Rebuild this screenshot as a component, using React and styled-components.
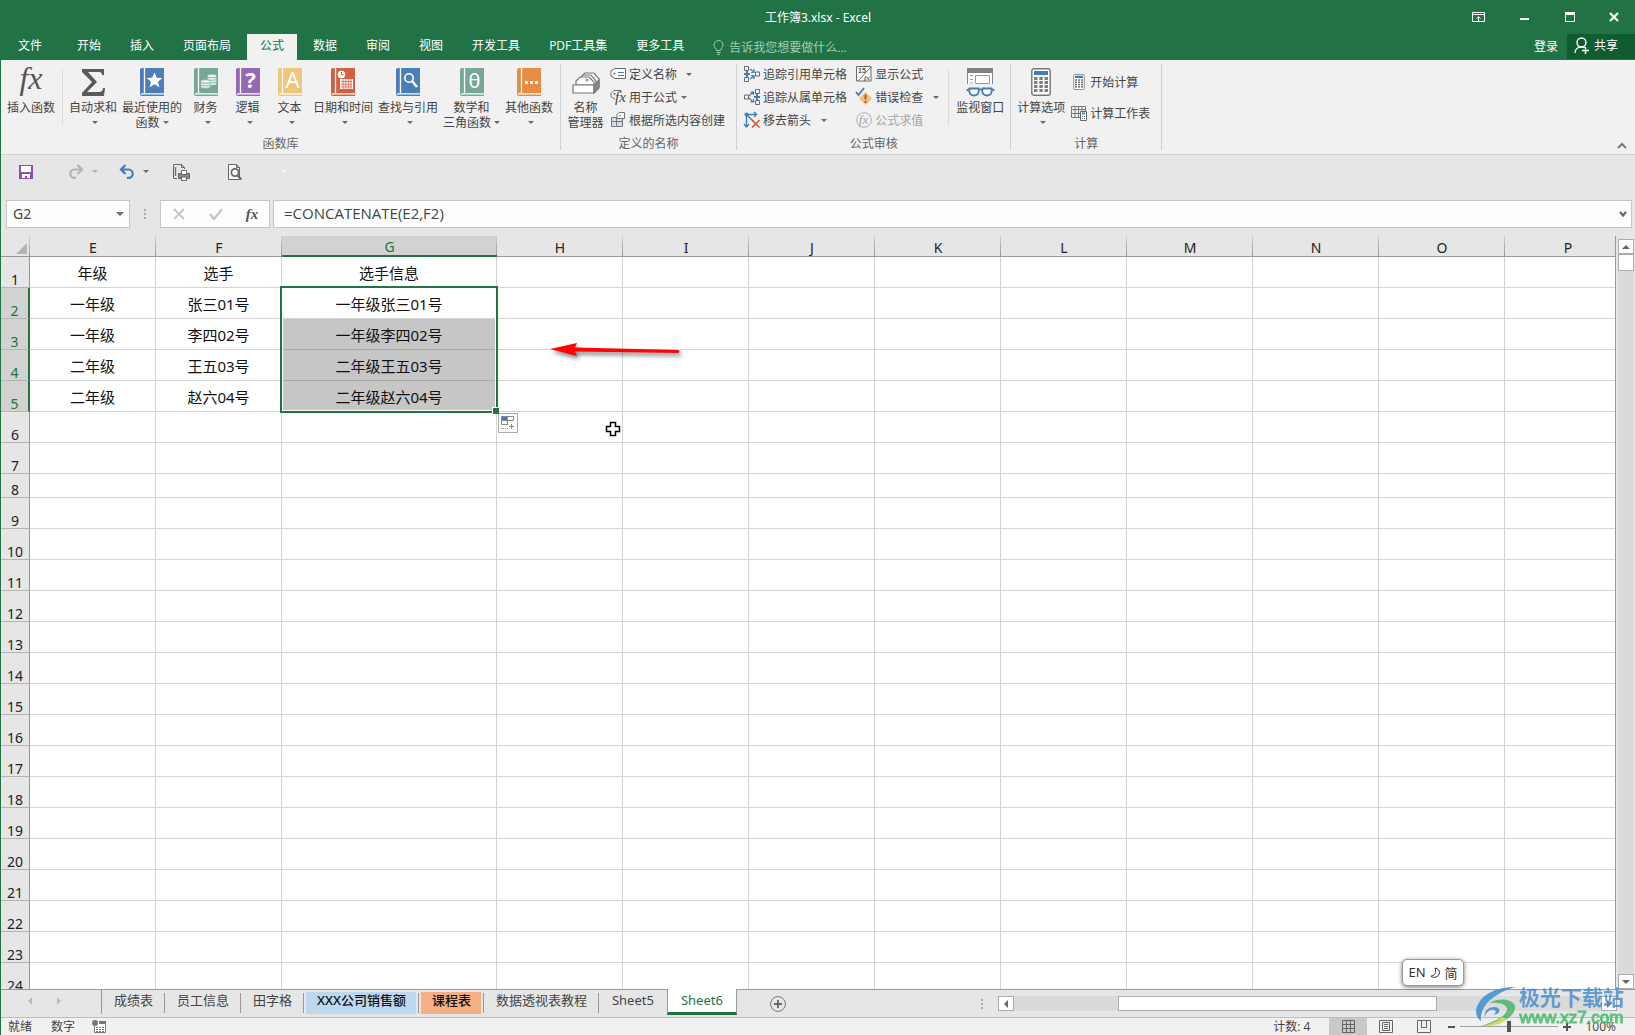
import React from "react";
import styled, { createGlobalStyle, css } from "styled-components";

const GREEN = "#217346";
const BLUE = "#3f7dbb";
const INK = "#444444";
const SANS = '"Noto Sans", "Noto Sans CJK SC", sans-serif';
const UI = '"Open Sans", "Noto Sans CJK SC", sans-serif';

const Global = createGlobalStyle`
  *, *::before, *::after { box-sizing: border-box; }
  html, body { margin: 0; height: 100%; }
  body { font-family: ${UI}; font-size: 12px; color: ${INK}; background: #e6e6e6; }
  button, input { font: inherit; color: inherit; }
  button { border: 0; padding: 0; margin: 0; background: none; cursor: default; }
  svg { display: block; flex: none; overflow: visible; }
`;

const Window = styled.div`
  display: flex;
  flex-direction: column;
  height: 100vh;
  border-left: 1px solid ${GREEN};
  background: #e6e6e6;
  position: relative;
  overflow: hidden;
`;

/* ---------- title bar and ribbon tabs ---------- */
const TitleBar = styled.header`
  display: grid;
  grid-template-columns: 1fr auto 1fr;
  align-items: center;
  height: 34px;
  flex: none;
  background: ${GREEN};
  color: #fff;
`;
const Title = styled.h1`
  margin: 0;
  font-family: ${SANS};
  font-size: 12px;
  font-weight: 400;
`;
const WindowButtons = styled.div`
  display: flex;
  justify-content: flex-end;
`;
const WindowButton = styled.button`
  display: grid;
  place-items: center;
  width: 46px;
  height: 32px;
  &:last-child { width: 42px; }
`;
const TabBar = styled.nav`
  display: flex;
  height: 26px;
  flex: none;
  gap: 3px;
  background: ${GREEN};
  color: #fff;
`;
const RibbonTab = styled.button`
  padding: 2px 13px 4px;
  line-height: 20px;
  white-space: nowrap;
  ${(p) => p.$file && css`
    width: 58px;
    margin-right: 2px;
  `}
  ${(p) => p.$active && css`
    background: #f1f1f1;
    color: ${GREEN};
  `}
`;
const TellMe = styled.label`
  display: flex;
  align-items: center;
  gap: 5px;
  padding-left: 13px;
  flex: 1;
`;
const TellInput = styled.input`
  border: 0;
  padding: 0;
  width: 160px;
  background: none;
  &::placeholder { color: #a3cdb3; opacity: 1; }
`;
const Login = styled.button`
  padding: 0 6px 2px;
`;
const Share = styled.button`
  display: flex;
  align-items: center;
  gap: 4px;
  height: 25px;
  padding: 0 17px 3px 7px;
  background: #0e5c2f;
`;

/* ---------- ribbon ---------- */
const Ribbon = styled.section`
  display: flex;
  height: 95px;
  flex: none;
  padding-top: 4px;
  background: #f1f1f1;
  border-bottom: 1px solid #d2d2d2;
`;
const Group = styled.div`
  display: flex;
  flex-direction: column;
  height: 86px;
  border-right: 1px solid #cfcfcf;
`;
const GroupBody = styled.div`
  display: flex;
  height: 72px;
  gap: ${(p) => p.$gap || 1}px;
  padding: 0 ${(p) => p.$right || 0}px 0 ${(p) => p.$left || 0}px;
`;
const GroupLabel = styled.div`
  height: 14px;
  line-height: 16px;
  text-align: center;
  color: #666;
`;
const InnerRule = styled.div`
  width: 1px;
  height: 55px;
  margin: 6px ${(p) => p.$after || 0}px 0 ${(p) => p.$before || 0}px;
  background: #dcdcdc;
`;
const BigButton = styled.button`
  display: flex;
  flex-direction: column;
  align-items: center;
  min-width: ${(p) => p.$width || 41}px;
  padding: 3px 2px 0;
  white-space: nowrap;
`;
const IconBox = styled.span`
  display: grid;
  place-items: center;
  height: 30px;
  margin-bottom: 3px;
`;
const Line = styled.span`
  display: flex;
  align-items: center;
  justify-content: center;
  gap: 3px;
  height: 15px;
  line-height: 15px;
`;
const CaretLine = styled(Line)`
  padding-left: 4px;
`;
const Caret = styled.i`
  width: 0;
  height: 0;
  border: 3px solid transparent;
  border-bottom-width: 0;
  border-top-color: ${(p) => p.$color || "#6a6a6a"};
`;
const SmallColumn = styled.div`
  display: flex;
  flex-direction: column;
  gap: ${(p) => p.$gap || 0}px;
  padding-top: ${(p) => p.$top || 0}px;
`;
const SmallButton = styled.button`
  display: flex;
  align-items: center;
  height: 23px;
  gap: 3px;
  padding: 0 4px 3px 0;
  white-space: nowrap;
  color: ${(p) => (p.$disabled ? "#a6a6a6" : INK)};
  ${Caret} { margin-left: ${(p) => p.$caret || 3}px; }
`;
const SmallIcon = styled.span`
  display: grid;
  place-items: center;
  width: 16px;
`;
const Collapse = styled.button`
  align-self: flex-end;
  margin-left: auto;
  padding: 0 8px 5px;
`;

/* ---------- quick access and formula bar ---------- */
const QuickBar = styled.div`
  display: flex;
  align-items: center;
  height: 45px;
  flex: none;
  padding: 0 0 12px 17px;
`;
const QuickButton = styled.button`
  display: flex;
  align-items: center;
  height: 20px;
  gap: 8px;
  margin-right: ${(p) => p.$after}px;
`;
const FormulaRow = styled.div`
  display: flex;
  height: 36px;
  flex: none;
  padding: 0 3px 8px 5px;
  font-family: ${SANS};
  font-size: 14px;
`;
const NameBox = styled.div`
  display: flex;
  align-items: center;
  width: 124px;
  padding: 0 5px 0 6px;
  background: #fdfdfd;
  border: 1px solid #c6c6c6;
`;
const BareInput = styled.input`
  flex: 1;
  min-width: 0;
  border: 0;
  padding: 0 0 2px;
  background: none;
  outline: 0;
`;
const BigCaret = styled(Caret)`
  display: block;
  border-width: 4px 4px 0;
`;
const Dots = styled.div`
  display: grid;
  place-items: center;
  width: ${(p) => p.$width}px;
`;
const FormulaButtons = styled.div`
  display: flex;
  align-items: center;
  justify-content: space-between;
  width: 110px;
  margin-right: 3px;
  padding: 0 11px 0 12px;
  background: #fdfdfd;
  border: 1px solid #c6c6c6;
`;
const FormulaBox = styled(NameBox)`
  flex: 1;
  padding: 0 4px 0 10px;
  font-family: ${UI};
  font-size: 15px;
`;

/* ---------- sheet ---------- */
const SheetArea = styled.main`
  display: flex;
  flex: 1;
  min-height: 0;
  border-bottom: 1px solid #999;
`;
const Viewport = styled.div`
  position: relative;
  flex: 1;
  min-width: 0;
  overflow: hidden;
`;
const GridTable = styled.table`
  table-layout: fixed;
  width: 1630px;
  border-collapse: separate;
  border-spacing: 0;
  font-family: ${SANS};
  font-size: 15px;
  line-height: 18px;
  color: #111;
`;
const Col = styled.col`
  width: ${(p) => p.$w}px;
`;
const ColHead = styled.th`
  height: 21px;
  padding: 4px 0 0;
  font-size: 14px;
  line-height: 16px;
  font-weight: 400;
  color: ${(p) => (p.$on ? GREEN : "#222")};
  border-bottom: ${(p) => (p.$on ? `2px solid ${GREEN}` : "1px solid #999")};
  background:
    linear-gradient(to bottom, #d0d0d0, #999) right / 1px 100% no-repeat,
    ${(p) => (p.$on ? "#d2d2d2" : "#e6e6e6")};
  ${(p) => p.$on && css`
    padding-top: 3px;
  `}
`;
const Corner = styled(ColHead)`
  svg { margin-left: auto; margin-right: 3px; }
`;
const RowHead = styled.th`
  height: ${(p) => p.$h}px;
  padding: 0;
  vertical-align: bottom;
  font-size: 14px;
  line-height: 15px;
  font-weight: 400;
  color: ${(p) => (p.$on ? GREEN : "#222")};
  background: ${(p) => (p.$on ? "#d2d2d2" : "#e6e6e6")};
  border-bottom: 1px solid #b4b4b4;
  border-right: ${(p) => (p.$on ? `2px solid ${GREEN}` : "1px solid #999")};
`;
const Cell = styled.td`
  position: relative;
  padding: 1px 0 0;
  text-align: center;
  white-space: nowrap;
  background: ${(p) => (p.$shade ? "#c6c6c6" : "#fff")};
  border-right: 1px solid #d4d4d4;
  border-bottom: 1px solid ${(p) => (p.$shade ? "#a8a8a8" : "#d4d4d4")};
`;
const Selection = styled.div`
  position: absolute;
  z-index: 1;
  top: -2px;
  left: -2px;
  width: 218px;
  height: 127px;
  border: 2px solid ${GREEN};
  box-shadow: inset 0 0 0 1px #fff;
  &::after {
    content: "";
    position: absolute;
    right: -3px;
    bottom: -3px;
    width: 7px;
    height: 7px;
    background: ${GREEN};
    border: solid #fff;
    border-width: 1px 0 0 1px;
  }
`;
const FillOptions = styled.button`
  position: absolute;
  left: 497px;
  top: 177px;
  display: grid;
  place-items: center;
  width: 20px;
  height: 20px;
  background: #fff;
  border: 1px solid #ababab;
`;
const Overlay = styled.div`
  position: absolute;
  left: ${(p) => p.$x}px;
  top: ${(p) => p.$y}px;
`;
const VScroll = styled.div`
  display: flex;
  flex-direction: column;
  width: 20px;
  padding: 3px 1px 0 2px;
  border-left: 1px solid #999;
`;
const ScrollButton = styled.button`
  display: grid;
  place-items: center;
  width: 16px;
  height: 15px;
  flex: none;
  background: #fff;
  border: 1px solid #ababab;
`;
const VTrack = styled.div`
  flex: 1;
  background: #dadada;
`;
const VThumb = styled.div`
  height: 17px;
  background: #fff;
  border: 1px solid #ababab;
`;

/* ---------- sheet tabs ---------- */
const SheetBar = styled.footer`
  display: flex;
  height: 28px;
  flex: none;
  border-bottom: 1px solid #bdbdbd;
`;
const SheetNav = styled.div`
  display: flex;
  align-items: center;
  width: 101px;
  padding: 0 0 2px 25px;
  gap: 21px;
  border-right: 1px solid #999;
  height: 24px;
`;
const SheetTab = styled.button`
  position: relative;
  height: 25px;
  padding: 0 12px 5px;
  font-family: ${SANS};
  font-size: 13px;
  line-height: 20px;
  white-space: nowrap;
  color: ${(p) => (p.$fill ? "#111" : INK)};
  background: linear-gradient(#999, #999) right 0 top 3px / 1px 20px no-repeat,
    ${(p) => (p.$fill ? `linear-gradient(${p.$fill}, ${p.$fill}) 2px 2px / calc(100% - 5px) 22px no-repeat` : "none")};
  ${(p) => p.$fill && css`
    font-weight: 500;
    padding-left: 13px;
    padding-right: 13px;
  `}
  ${(p) => p.$active && css`
    width: 70px;
    background: #fff;
    color: ${GREEN};
    margin-top: -1px;
    height: 26px;
    border-right: 1px solid #999;
    border-left: 1px solid #999;
    border-bottom: 3px solid ${GREEN};
    padding-bottom: 1px;
  `}
  ${(p) => p.$last && css`
    padding-left: 13px;
    padding-right: 13px;
    background: none;
  `}
`;
const SheetTabs = styled.div`
  display: flex;
  flex: 1;
  min-width: 0;
`;
const AddSheet = styled.button`
  padding: 0 33px;
`;
const HScroll = styled.div`
  display: flex;
  align-items: center;
  flex: 0 0 41%;
  padding-right: 18px;
`;
const HTrack = styled.div`
  flex: 1;
  height: 15px;
  padding-left: 16%;
  background: #dadada;
`;
const HThumb = styled.div`
  width: 66%;
  height: 15px;
  background: #fff;
  border: 1px solid #ababab;
`;

/* ---------- status bar ---------- */
const StatusBar = styled.footer`
  display: flex;
  align-items: center;
  height: 17px;
  flex: none;
  padding: 0 19px 0 7px;
  background: #f1f1f1;
`;
const StatusText = styled.span`
  line-height: 16px;
  margin-right: ${(p) => p.$after || 0}px;
  margin-left: ${(p) => p.$push || "0"};
`;
const ViewButton = styled.button`
  display: grid;
  place-items: center;
  width: 38px;
  height: 17px;
  background: ${(p) => (p.$on ? "#c8c8c8" : "none")};
`;
const ZoomButton = styled.button`
  display: grid;
  place-items: center;
  width: 17px;
  height: 17px;
`;
const ZoomSlider = styled.input`
  appearance: none;
  width: 98px;
  height: 12px;
  margin: 0;
  background: linear-gradient(#a0a0a0, #a0a0a0) center / 100% 1px no-repeat;
  &::-webkit-slider-thumb {
    appearance: none;
    width: 4px;
    height: 11px;
    background: #555;
  }
`;

/* ---------- floating pieces ---------- */
const ImeBadge = styled.div`
  position: absolute;
  right: 171px;
  bottom: 49px;
  display: flex;
  align-items: center;
  justify-content: center;
  gap: 4px;
  width: 62px;
  height: 27px;
  padding-bottom: 1px;
  font-family: ${SANS};
  font-size: 13px;
  color: #333;
  background: #fff;
  border: 1px solid #999;
  border-radius: 5px;
  box-shadow: 0 1px 4px rgba(0, 0, 0, 0.55);
`;
const Watermark = styled.div`
  position: absolute;
  right: 11px;
  bottom: 7px;
  display: flex;
  align-items: center;
  gap: 1px;
  opacity: 0.85;
  pointer-events: none;
`;
const MarkText = styled.div`
  display: flex;
  flex-direction: column;
  align-items: center;
  font-weight: 700;
`;
const MarkName = styled.span`
  font-size: 21px;
  line-height: 22px;
  color: #4d8fd0;
`;
const MarkUrl = styled.span`
  font-family: "Liberation Sans", sans-serif;
  font-size: 17px;
  font-weight: 400;
  line-height: 20px;
  color: #45bb6a;
  -webkit-text-stroke: 1px #45bb6a;
`;

/* ---------- icons ---------- */
const Svg = ({ w, h, children, ...rest }) => (
  <svg width={w} height={h} viewBox={`0 0 ${w} ${h}`} fill="none" aria-hidden="true" {...rest}>
    {children}
  </svg>
);
const Fx = ({ w = 24, h = 28, size = 32, color = "#555", weight = 400 }) => (
  <Svg w={w} h={h}>
    <text x={w / 2} y={h * 0.76} textAnchor="middle" fontFamily="Liberation Serif, serif" fontStyle="italic" fontWeight={weight} fontSize={size} fill={color}>fx</text>
  </Svg>
);
const Sigma = () => (
  <Svg w={24} h={28}>
    <path d="M1 1h22v6h-2c0-2-1-3-3-3H7l9 10-10 10h12c2 0 4-1 4-4h2l-1 8H1v-3l10-11L1 4z" fill="#5a5a5a" />
  </Svg>
);
const Book = ({ color, children }) => (
  <Svg w={24} h={28}>
    <path d="M2 0h22v28H2a2 2 0 0 1-2-2V2a2 2 0 0 1 2-2z" fill={color} />
    <path d="M4.5 0v25M1 25.8h23" stroke="#fff" strokeWidth="1.3" />
    {children}
  </Svg>
);
const BookLetter = ({ children, weight = 400, size = 22 }) => (
  <text x="14.5" y="20" textAnchor="middle" fontFamily="Noto Sans, sans-serif" fontSize={size} fontWeight={weight} fill="#fff">{children}</text>
);
const Coins = () => (
  <g fill="#e6f1ed" stroke="#76a797" strokeWidth=".7">
    {[15.5, 13, 10.5, 8].map((y) => <ellipse key={y} cx="18" cy={y} rx="4.8" ry="1.9" />)}
    {[18.5, 16, 13.5].map((y) => <ellipse key={y} cx="11.5" cy={y} rx="5" ry="1.900" />)}
  </g>
);
const DateMark = () => (
  <g>
    <circle cx="10.5" cy="6.5" r="3.8" fill="#fff" />
    <path d="M10.5 4v2.7h2" stroke="#d55f42" />
    <path d="M9 11h13v10H9z" fill="#fff" />
    <path d="M10 13.5h11M10 16.2h11M10 18.9h11M12 11v10M14.7 11v10M17.3 11v10M20 11v10" stroke="#d55f42" strokeWidth=".8" />
  </g>
);
const NameManager = () => (
  <Svg w={28} h={28}>
    <g stroke="#777" strokeWidth="1.2" fill="#fff">
      <path d="M10 8l3-3h9l5 6v8" />
      <path d="M8 10l3-3h8l5 6v6" />
      <path d="M4 17v-4l4-4h9l5 5v3z" />
      <path d="M1 17h21v8H1z" />
      <path d="M22 17l5-5v8l-5 5z" fill="#888" />
    </g>
    <circle cx="15" cy="12" r="1" stroke="#777" />
  </Svg>
);
const TagIcon = () => (
  <Svg w={16} h={16}>
    <path d="M5 2.5h10.5v10H5L1 10V5z" stroke="#6a6a6a" fill="#fff" />
    <path d="M8 6.5h6M8 9.5h6" stroke={BLUE} strokeWidth="1.2" />
    <circle cx="4.5" cy="7.5" r="1" fill="#6a6a6a" />
  </Svg>
);
const TagFx = () => (
  <Svg w={16} h={16}>
    <path d="M11 4V1.500H4L1 4.500v3l4 3" stroke="#6a6a6a" />
    <circle cx="4.500" cy="5" r="1" fill="#6a6a6a" />
    <text x="5" y="13" fontFamily="Liberation Serif, serif" fontStyle="italic" fontSize="15" fill="#444">fx</text>
  </Svg>
);
const CreateFrom = () => (
  <Svg w={16} h={16}>
    <path d="M1.500 5.500h11v9h-11z" fill="#cfdceb" stroke="#777" />
    <path d="M1 9.500h12M6.500 5v10" stroke="#777" />
    <path d="M7 2.500L9 .5h5.500v6H7z" fill="#fff" stroke="#777" />
    <circle cx="10" cy="3.500" r=".8" fill="#777" />
  </Svg>
);
const Precedents = () => (
  <Svg w={16} h={16}>
    <path d="M.5 .5h4v4h-4zM.5 11.500h4v4h-4zM11.500 6h4v4h-4z" stroke="#6a6a6a" />
    <path d="M3 5v6M0 8h6" stroke={BLUE} strokeWidth="2" />
    <path d="M6 3l4 3M6 13l4-3M10 3v3.500H7M10 13V9.500H7" stroke={BLUE} strokeWidth="1.200" />
  </Svg>
);
const Dependents = () => (
  <Svg w={16} h={16}>
    <path d="M11.500 .5h4v4h-4zM11.500 11.500h4v4h-4zM.5 6h4v4h-4z" stroke="#6a6a6a" />
    <path d="M13 5v6M10 8h6" stroke={BLUE} strokeWidth="2" />
    <path d="M5 7l4-4M5 9l4 4M6.500 3h3v3M6.500 13h3v-3" stroke={BLUE} strokeWidth="1.200" />
  </Svg>
);
const RemoveArrows = () => (
  <Svg w={16} h={16}>
    <path d="M2.500 3v11M2.500 2.500h9M3 3l7 7M0 12l2.500 3L5 12M10 0l2.500 2.500L10 5" stroke={BLUE} strokeWidth="1.4" />
    <circle cx="2.500" cy="2.500" r="2" fill={BLUE} />
    <path d="M8 8l7.500 7.500M15.500 8L8 15.500" stroke="#d9532f" strokeWidth="1.6" />
  </Svg>
);
const ShowFormulas = () => (
  <Svg w={16} h={16}>
    <path d="M.5 .5h14.500v14.500H.5z" stroke="#6a6a6a" fill="#fff" />
    <path d="M2 15L15 1" stroke="#6a6a6a" />
    <text x="2" y="7" fontFamily="Liberation Sans, sans-serif" fontSize="7" fontWeight="700" fill="#555">15</text>
    <text x="8" y="14" fontFamily="Liberation Serif, serif" fontStyle="italic" fontSize="7" fontWeight="700" fill="#555">fx</text>
  </Svg>
);
const ErrorCheck = () => (
  <Svg w={16} h={16}>
    <path d="M9.500 3l6.500 6.500-6.500 6.500L3 9.500z" fill="#efc375" />
    <path d="M9.500 5.500v5M9.500 12v2" stroke="#c8402b" strokeWidth="1.8" />
    <path d="M0 3l2.500 3L8 -1" stroke={BLUE} strokeWidth="1.8" />
  </Svg>
);
const Evaluate = () => (
  <Svg w={16} h={16}>
    <circle cx="8" cy="8" r="7.300" stroke="#b5a9b8" />
    <text x="7.500" y="12" textAnchor="middle" fontFamily="Liberation Serif, serif" fontStyle="italic" fontSize="13" fill="#a6a6a6">fx</text>
  </Svg>
);
const WatchWindow = () => (
  <Svg w={28} h={30}>
    <path d="M1.500 1v16M26.500 1v16" stroke="#8a8a8a" />
    <path d="M2 5h24v12H2z" fill="#fff" />
    <path d="M1 1h26v5H1z" fill="#808080" />
    <path d="M9.500 8.500h14v8h-14zM4 8.500h3M4 12.500h3M4 16h3" stroke="#999" />
    <g stroke={BLUE} strokeWidth="1.800" fill="#fff">
      <path d="M3.500 21.500h9c1 4-.5 7-4.500 7s-5.500-3-4.500-7zM16.500 21.500h9c1 4-.5 7-4.500 7s-5.500-3-4.500-7z" />
      <path d="M12.500 23c1.500-1 2.500-1 4 0M3.500 22l-3 1.500M25.500 22l3 1.500" fill="none" />
    </g>
  </Svg>
);
const CalcIcon = ({ w = 20, h = 28 }) => (
  <svg width={w} height={h} viewBox="0 0 20 28" fill="none" aria-hidden="true">
    <rect x=".8" y=".8" width="18.400" height="26.400" rx="2" stroke="#777" strokeWidth="1.400" fill="#fff" />
    <path d="M3 3h14v4H3z" fill={BLUE} />
    {[9, 13, 17, 21].map((y) => [3, 8.3, 13.5].map((x) => <rect key={`${x}-${y}`} x={x} y={y} width="3.500" height="3" fill="#808080" />))}
  </svg>
);
const CalcSheet = () => (
  <Svg w={16} h={16}>
    <path d="M.5 1.500h14v11H.5zM.5 4.500h14M.5 8.500h9M4 1v12M7.500 1v12M11 1v6" stroke="#777" />
    <path d="M9.500 6.500h6v9h-6z" fill="#fff" stroke="#666" />
    <path d="M11 8.500h3" stroke={BLUE} strokeWidth="2" />
    <path d="M11 11.500h1M13 11.500h1M11 13.500h1M13 13.500h1" stroke="#666" />
  </Svg>
);
const SaveIcon = () => (
  <Svg w={16} h={16}>
    <path d="M1 1h14v14H1z" fill="#8a52a8" />
    <path d="M3 2h10v6H3zM4 10h8v4H9v-2H7v2H4z" fill="#fff" />
  </Svg>
);
const CurvedArrow = ({ color, flip }) => (
  <Svg w={16} h={16}>
    <g transform={flip ? "translate(16 0) scale(-1 1)" : undefined}>
      <path d="M2 5.500h7.500a4.200 4.200 0 0 1 0 8.400H8M6.500 1L2 5.500 6.500 10" stroke={color} strokeWidth="2.200" />
    </g>
  </Svg>
);
const PrintIcon = () => (
  <Svg w={18} h={18}>
    <path d="M5 15.500H1.500v-14h8l3 3V6M9.500 1.500v3h3" stroke="#666" />
    <path d="M3.500 4v9" stroke={BLUE} strokeWidth="1.400" />
    <path d="M6.500 10.500h11v5h-11z" fill="#888" stroke="#666" />
    <path d="M9.500 7.500h5v4h-5zM9.500 14h5v3.500h-5z" fill="#fff" stroke="#666" />
  </Svg>
);
const PreviewIcon = () => (
  <Svg w={16} h={18}>
    <path d="M1.500 1.500h8l3 3v12h-11zM9.500 1.500v3h3" stroke="#666" fill="#f6f6f6" />
    <circle cx="8" cy="9.500" r="3.600" stroke="#666" strokeWidth="1.800" fill="#fff" />
    <path d="M10.500 12.500l4 4" stroke="#666" strokeWidth="2" />
  </Svg>
);
const DotsIcon = () => (
  <Svg w={4} h={12}>
    <path d="M1 1h2v2H1zM1 5h2v2H1zM1 9h2v2H1z" fill="#aaa" />
  </Svg>
);
const Arrowhead = ({ dir, color = "#666" }) => {
  const d = {
    up: "M0 6l4-4 4 4z",
    down: "M0 2l4 4 4-4z",
    left: "M6 0L2 4l4 4z",
    right: "M2 0l4 4-4 4z",
  }[dir];
  return <Svg w={8} h={8}><path d={d} fill={color} /></Svg>;
};
const Swirl = () => (
  <svg width="43" height="42" viewBox="0 0 43 42" fill="none" aria-hidden="true">
    <path d="M42 1C22 0 3 9 1 25c0 5 2 8 5 10-1-9 4-19 16-26 6-4 13-7 20-8z" fill="#3c8fd0" />
    <path d="M14 17c10-6 24-4 26 3 2 10-15 20-35 20 12-3 25-9 27-16 1-6-9-8-18-7z" fill="#4bb56c" />
    <path d="M5 40c9-1 17-4 22-9l5 2c-7 6-17 8-27 7z" fill="#c9d84a" />
    <path d="M10 31c-2-8 8-12 13-9 4 3-1 8-5 6 3 0 4-3 1-4-4-1-8 2-9 7z" fill="#3c8fd0" />
  </svg>
);

/* ---------- content ---------- */
const TABS = ["文件", "开始", "插入", "页面布局", "公式", "数据", "审阅", "视图", "开发工具", "PDF工具集", "更多工具"];

const LIBRARY = [
  { lines: ["自动求和"], icon: <Sigma /> },
  { lines: ["最近使用的", "函数"], icon: <Book color="#4a7fb8"><path d="M14.500 4.500l2.200 5.200 5.600.4-4.300 3.600 1.400 5.500-4.900-3-4.900 3 1.400-5.500-4.300-3.600 5.600-.4z" fill="#fff" /></Book> },
  { lines: ["财务"], icon: <Book color="#76a797"><Coins /></Book> },
  { lines: ["逻辑"], icon: <Book color="#9668b8"><BookLetter weight={700}>?</BookLetter></Book> },
  { lines: ["文本"], icon: <Book color="#eec67c"><BookLetter>A</BookLetter></Book> },
  { lines: ["日期和时间"], icon: <Book color="#d55f42"><DateMark /></Book> },
  { lines: ["查找与引用"], icon: <Book color="#4a7fb8"><circle cx="13" cy="10" r="4.200" stroke="#fff" strokeWidth="1.600" /><path d="M16 13l5 6" stroke="#fff" strokeWidth="2.400" /></Book> },
  { lines: ["数学和", "三角函数"], icon: <Book color="#76a797"><BookLetter size={20}>θ</BookLetter></Book> },
  { lines: ["其他函数"], icon: <Book color="#e68d43"><path d="M8 13h3v3H8zM13 13h3v3h-3zM18 13h3v3h-3z" fill="#fff" /></Book> },
];

const COLUMNS = [["E", 126], ["F", 126], ["G", 215], ["H", 126], ["I", 126], ["J", 126], ["K", 126], ["L", 126], ["M", 126], ["N", 126], ["O", 126], ["P", 126]];

const DATA = {
  1: ["年级", "选手", "选手信息"],
  2: ["一年级", "张三01号", "一年级张三01号"],
  3: ["一年级", "李四02号", "一年级李四02号"],
  4: ["二年级", "王五03号", "二年级王五03号"],
  5: ["二年级", "赵六04号", "二年级赵六04号"],
};
const ROWS = Array.from({ length: 24 }, (_, i) => i + 1);

const SHEETS = [
  { name: "成绩表" },
  { name: "员工信息" },
  { name: "田字格" },
  { name: "XXX公司销售额", fill: "#bdd7ee" },
  { name: "课程表", fill: "#f4b084" },
  { name: "数据透视表教程" },
  { name: "Sheet5", last: true },
  { name: "Sheet6", active: true },
];

function Big({ icon, lines, caret = true, width }) {
  return (
    <BigButton $width={width}>
      <IconBox>{icon}</IconBox>
      <Line>{lines[0]}</Line>
      {lines[1] ? <Line>{lines[1]}{caret && <Caret />}</Line> : caret && <CaretLine><Caret /></CaretLine>}
    </BigButton>
  );
}

function Small({ icon, label, caret, disabled }) {
  return (
    <SmallButton $caret={caret} $disabled={disabled}>
      <SmallIcon>{icon}</SmallIcon>
      {label}
      {caret !== undefined && <Caret />}
    </SmallButton>
  );
}

function RibbonPanel() {
  return (
    <Ribbon>
      <Group>
        <GroupBody $left={2} $right={5}>
          <Big icon={<Fx />} lines={["插入函数"]} caret={false} width={56} />
          <InnerRule $before={2} $after={3} />
          {LIBRARY.map((item) => <Big key={item.lines[0]} {...item} />)}
        </GroupBody>
        <GroupLabel>函数库</GroupLabel>
      </Group>
      <Group>
        <GroupBody $left={4} $right={7} $gap={4}>
          <Big icon={<NameManager />} lines={["名称", "管理器"]} caret={false} />
          <SmallColumn>
            <Small icon={<TagIcon />} label="定义名称" caret={6} />
            <Small icon={<TagFx />} label="用于公式" caret={1} />
            <Small icon={<CreateFrom />} label="根据所选内容创建" />
          </SmallColumn>
        </GroupBody>
        <GroupLabel>定义的名称</GroupLabel>
      </Group>
      <Group>
        <GroupBody $left={7} $right={4} $gap={5}>
          <SmallColumn>
            <Small icon={<Precedents />} label="追踪引用单元格" />
            <Small icon={<Dependents />} label="追踪从属单元格" />
            <Small icon={<RemoveArrows />} label="移去箭头" caret={7} />
          </SmallColumn>
          <SmallColumn>
            <Small icon={<ShowFormulas />} label="显示公式" />
            <Small icon={<ErrorCheck />} label="错误检查" caret={7} />
            <Small icon={<Evaluate />} label="公式求值" disabled />
          </SmallColumn>
          <InnerRule />
          <Big icon={<WatchWindow />} lines={["监视窗口"]} caret={false} />
        </GroupBody>
        <GroupLabel>公式审核</GroupLabel>
      </Group>
      <Group>
        <GroupBody $left={4} $right={7} $gap={4}>
          <Big icon={<CalcIcon />} lines={["计算选项"]} />
          <SmallColumn $top={8} $gap={8}>
            <Small icon={<CalcIcon w={12} h={16} />} label="开始计算" />
            <Small icon={<CalcSheet />} label="计算工作表" />
          </SmallColumn>
        </GroupBody>
        <GroupLabel>计算</GroupLabel>
      </Group>
      <Collapse aria-label="折叠功能区">
        <Svg w={10} h={7}><path d="M1 6l4-4 4 4" stroke="#777" strokeWidth="2" /></Svg>
      </Collapse>
    </Ribbon>
  );
}

function Sheet() {
  return (
    <SheetArea>
      <Viewport>
        <GridTable>
          <colgroup>
            <Col $w={29} />
            {COLUMNS.map(([name, w]) => <Col key={name} $w={w} />)}
          </colgroup>
          <thead>
            <tr>
              <Corner aria-label="全选">
                <Svg w={11} h={11}><path d="M11 0v11H0z" fill="#b4b4b4" /></Svg>
              </Corner>
              {COLUMNS.map(([name]) => <ColHead key={name} scope="col" $on={name === "G"}>{name}</ColHead>)}
            </tr>
          </thead>
          <tbody>
            {ROWS.map((row) => (
              <tr key={row}>
                <RowHead scope="row" $h={row === 8 ? 24 : 31} $on={row >= 2 && row <= 5}>{row}</RowHead>
                {COLUMNS.map(([name], i) => (
                  <Cell key={name} $shade={name === "G" && row >= 3 && row <= 5}>
                    {DATA[row]?.[i]}
                    {name === "G" && row === 2 && <Selection />}
                  </Cell>
                ))}
              </tr>
            ))}
          </tbody>
        </GridTable>
        <FillOptions aria-label="自动填充选项">
          <Svg w={16} h={16}>
            <path d="M1.500 1.500h12v4h-12zM1.500 5.500h6v4h-6zM7.500 1.500v4" stroke="#888" />
            <path d="M2 2h5v3H2z" fill="#3b78e7" />
            <path d="M1 13.500h7" stroke="#888" strokeDasharray="1 1" />
            <path d="M9 11.500h5M11.500 9v5" stroke="#888" />
          </Svg>
        </FillOptions>
        <Overlay $x={545} $y={99}>
          <svg width="142" height="36" viewBox="0 0 142 36" fill="none" aria-hidden="true" style={{ filter: "drop-shadow(2px 3px 2px rgba(0,0,0,.5))" }}>
            <path d="M4 14l27-6-2 4.500 103 2.500a1 1 0 0 1 0 3L29 16.500l2 4.500z" fill="#fb0505" />
          </svg>
        </Overlay>
        <Overlay $x={604} $y={185}>
          <Svg w={16} h={16}>
            <path d="M5.500 1.500h5v4h4v5h-4v4h-5v-4h-4v-5h4z" fill="#fff" stroke="#000" strokeWidth="1.500" />
          </Svg>
        </Overlay>
      </Viewport>
      <VScroll>
        <ScrollButton aria-label="向上滚动"><Arrowhead dir="up" /></ScrollButton>
        <VTrack><VThumb /></VTrack>
        <ScrollButton aria-label="向下滚动"><Arrowhead dir="down" /></ScrollButton>
      </VScroll>
    </SheetArea>
  );
}

export default function App() {
  return (
    <Window>
      <Global />
      <TitleBar>
        <span />
        <Title>工作簿3.xlsx - Excel</Title>
        <WindowButtons>
          <WindowButton aria-label="功能区显示选项">
            <Svg w={13} h={10}><path d="M.5 .5h12v9H.5zM0 2.500h13M6.500 9V5M4.500 6.500l2-2 2 2" stroke="#fff" /></Svg>
          </WindowButton>
          <WindowButton aria-label="最小化">
            <Svg w={9} h={10}><path d="M0 7h9" stroke="#fff" strokeWidth="2" /></Svg>
          </WindowButton>
          <WindowButton aria-label="最大化">
            <Svg w={10} h={10}><path d="M.5 .5h9v9h-9z" stroke="#fff" /><path d="M0 0h10v3H0z" fill="#fff" /></Svg>
          </WindowButton>
          <WindowButton aria-label="关闭">
            <Svg w={10} h={10}><path d="M1 1l8 8M9 1L1 9" stroke="#fff" strokeWidth="2.200" /></Svg>
          </WindowButton>
        </WindowButtons>
      </TitleBar>
      <TabBar>
        {TABS.map((t, i) => <RibbonTab key={t} $file={i === 0} $active={t === "公式"}>{t}</RibbonTab>)}
        <TellMe>
          <Svg w={11} h={15}><path d="M3.500 10.500C3 8 1 7.500 1 5a4.500 4.500 0 0 1 9 0c0 2.500-2 3-2.500 5.500zM3.500 12.500h4M4 14.300h3" stroke="#a3cdb3" /></Svg>
          <TellInput aria-label="告诉我您想要做什么" placeholder="告诉我您想要做什么..." />
        </TellMe>
        <Login>登录</Login>
        <Share>
          <Svg w={16} h={17}>
            <circle cx="7.500" cy="5.500" r="4.500" stroke="#fff" strokeWidth="1.400" />
            <path d="M1 16c0-4 3-6 6.500-6 1 0 2 0 3 .6M8 13.500h7M11.500 10v7" stroke="#fff" strokeWidth="1.400" />
          </Svg>
          共享
        </Share>
      </TabBar>
      <RibbonPanel />
      <QuickBar>
        <QuickButton $after={34} aria-label="保存"><SaveIcon /></QuickButton>
        <QuickButton $after={21} aria-label="恢复"><CurvedArrow color="#b4b4b4" flip /><Caret $color="#b4b4b4" /></QuickButton>
        <QuickButton $after={23} aria-label="撤消"><CurvedArrow color={BLUE} /><Caret /></QuickButton>
        <QuickButton $after={37} aria-label="打印"><PrintIcon /></QuickButton>
        <QuickButton $after={38} aria-label="打印预览"><PreviewIcon /></QuickButton>
        <QuickButton aria-label="自定义快速访问工具栏"><Caret $color="#f6f6f6" /></QuickButton>
      </QuickBar>
      <FormulaRow>
        <NameBox>
          <BareInput aria-label="名称框" defaultValue="G2" />
          <button aria-label="名称列表"><BigCaret /></button>
        </NameBox>
        <Dots $width={30}><DotsIcon /></Dots>
        <FormulaButtons>
          <button aria-label="取消"><Svg w={12} h={12}><path d="M1 1l10 10M11 1L1 11" stroke="#c4c4c4" strokeWidth="1.800" /></Svg></button>
          <button aria-label="输入"><Svg w={14} h={12}><path d="M1 6l4 5 8-10" stroke="#c4c4c4" strokeWidth="2.200" /></Svg></button>
          <button aria-label="插入函数"><Fx w={12} h={18} size={15} weight={700} /></button>
        </FormulaButtons>
        <FormulaBox>
          <BareInput aria-label="编辑栏" defaultValue="=CONCATENATE(E2,F2)" />
          <button aria-label="展开编辑栏"><Svg w={8} h={7}><path d="M1 1l3 3.500L7 1" stroke="#666" strokeWidth="2.200" /></Svg></button>
        </FormulaBox>
      </FormulaRow>
      <Sheet />
      <SheetBar>
        <SheetTabs>
          <SheetNav>
            <button aria-label="上一个工作表"><Arrowhead dir="left" color="#bbb" /></button>
            <button aria-label="下一个工作表"><Arrowhead dir="right" color="#bbb" /></button>
          </SheetNav>
          {SHEETS.map((s) => <SheetTab key={s.name} $fill={s.fill} $active={s.active} $last={s.last}>{s.name}</SheetTab>)}
          <AddSheet aria-label="新工作表">
            <Svg w={16} h={16}><circle cx="8" cy="8" r="7.400" stroke="#777" /><path d="M8 4v8M4 8h8" stroke="#666" strokeWidth="1.800" /></Svg>
          </AddSheet>
        </SheetTabs>
        <HScroll>
          <Dots $width={33}><DotsIcon /></Dots>
          <ScrollButton aria-label="向左滚动"><Arrowhead dir="left" /></ScrollButton>
          <HTrack><HThumb /></HTrack>
          <ScrollButton aria-label="向右滚动"><Arrowhead dir="right" /></ScrollButton>
        </HScroll>
      </SheetBar>
      <StatusBar>
        <StatusText $after={19}>就绪</StatusText>
        <StatusText $after={17}>数字</StatusText>
        <Svg w={14} h={13}>
          <path d="M2.500 6v6.500h11V2.500H7" stroke="#777" fill="#fff" /><path d="M7 1h7v3H7z" fill="#777" />
          <circle cx="3" cy="3" r="3" fill="#777" />
          <path d="M4 7.500h8M4 9.500h8M4 11.500h8" stroke="#777" strokeDasharray="2 1" />
        </Svg>
        <StatusText $push="auto" $after={19}>计数: 4</StatusText>
        <ViewButton $on aria-label="普通"><Svg w={13} h={13}><path d="M.5 .5h12v12H.5zM4.500 0v13M8.500 0v13M0 4.500h13M0 8.500h13" stroke="#666" /></Svg></ViewButton>
        <ViewButton aria-label="页面布局"><Svg w={14} h={13}><path d="M.5 .5h13v12H.5zM3.500 2.500h7v8h-7zM5 4.500h4M5 6.500h4M5 8.500h4" stroke="#666" /></Svg></ViewButton>
        <ViewButton aria-label="分页预览"><Svg w={14} h={13}><path d="M.5 .5h13v12H.5zM4.500 1v6.500M9.500 1v6.500M4 7.500h6" stroke="#666" /></Svg></ViewButton>
        <ZoomButton aria-label="缩小"><Svg w={7} h={8}><path d="M0 4h7" stroke="#555" strokeWidth="2" /></Svg></ZoomButton>
        <ZoomSlider type="range" aria-label="显示比例" min="0" max="200" defaultValue="100" />
        <ZoomButton aria-label="放大"><Svg w={8} h={8}><path d="M0 4h8M4 0v8" stroke="#555" strokeWidth="2" /></Svg></ZoomButton>
        <StatusText $push="10px">100%</StatusText>
      </StatusBar>
      <ImeBadge>
        <span>EN</span>
        <Svg w={11} h={11}><path d="M5 1c6 1 6 8 0 9.300C3 10.500 1 10 1 9c3 0 6-3 4-8z" stroke="#333" /></Svg>
        <span>简</span>
      </ImeBadge>
      <Watermark>
        <Swirl />
        <MarkText>
          <MarkName>极光下载站</MarkName>
          <MarkUrl>www.xz7.com</MarkUrl>
        </MarkText>
      </Watermark>
    </Window>
  );
}
